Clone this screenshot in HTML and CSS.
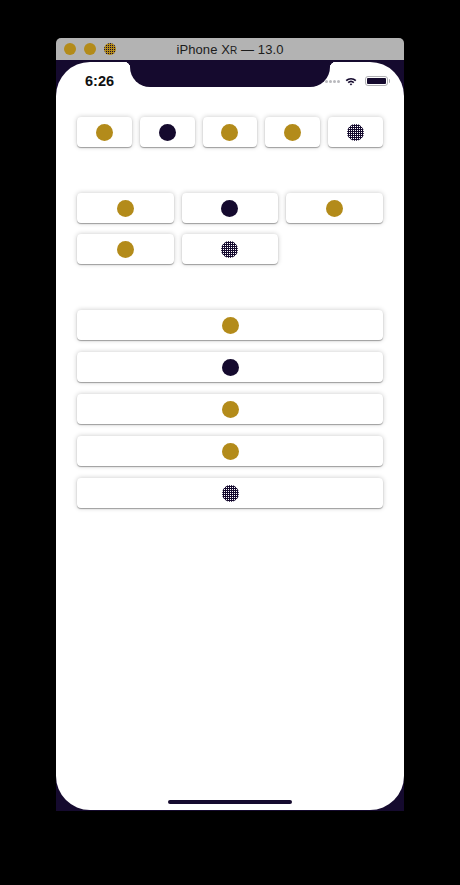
FILE: index.html
```html
<!DOCTYPE html>
<html lang="en">
<head>
<meta charset="utf-8">
<title>iPhone XR — 13.0</title>
<link rel="stylesheet" href="styles.css">
</head>
<body>
<div class="device">
  <div class="titlebar">
    <div class="lights">
      <span class="light"></span>
      <span class="light"></span>
      <span class="light dither"></span>
    </div>
    <div class="title">iPhone X<span class="sc">R</span> — 13.0</div>
    <div></div>
  </div>
  <div class="frame">
    <div class="screen">
      <div class="notch"></div>
      <div class="status">
        <span class="time">6:26</span>
        <div class="status-icons">
          <span class="signal"><i></i><i></i><i></i><i></i></span>
          <svg class="wifi" width="12" height="9" viewBox="0 0 12 9">
            <path d="M0.6 3.1 A7.8 7.8 0 0 1 11.4 3.1 L10.2 4.3 A6.1 6.1 0 0 0 1.8 4.3 Z" fill="#150a2e"/>
            <path d="M2.6 5.1 A5 5 0 0 1 9.4 5.1 L8.2 6.3 A3.3 3.3 0 0 0 3.8 6.3 Z" fill="#150a2e"/>
            <path d="M4.6 7.1 A2 2 0 0 1 7.4 7.1 L6 8.6 Z" fill="#150a2e"/>
          </svg>
          <span class="battery"><span class="level"></span></span><span class="nub"></span>
        </div>
      </div>
      <main class="content">
        <section class="grid five">
          <div class="card"><span class="dot gold"></span></div>
          <div class="card"><span class="dot dark"></span></div>
          <div class="card"><span class="dot gold"></span></div>
          <div class="card"><span class="dot gold"></span></div>
          <div class="card"><span class="dot dotted"></span></div>
        </section>
        <section class="grid three">
          <div class="card"><span class="dot gold"></span></div>
          <div class="card"><span class="dot dark"></span></div>
          <div class="card"><span class="dot gold"></span></div>
          <div class="card"><span class="dot gold"></span></div>
          <div class="card"><span class="dot dotted"></span></div>
        </section>
        <section class="list">
          <div class="card"><span class="dot gold"></span></div>
          <div class="card"><span class="dot dark"></span></div>
          <div class="card"><span class="dot gold"></span></div>
          <div class="card"><span class="dot gold"></span></div>
          <div class="card"><span class="dot dotted"></span></div>
        </section>
      </main>
      <div class="home"></div>
    </div>
  </div>
</div>
</body>
</html>
```

FILE: styles.css
```css
html, body {
  margin: 0;
  padding: 0;
  background: #000;
}

body {
  font-family: "Liberation Sans", Arial, sans-serif;
  width: 460px;
  height: 885px;
  overflow: hidden;
}

.device {
  width: 348px;
  margin: 38px 0 0 56px;
}

.titlebar {
  height: 22px;
  background: #b3b3b3;
  border-radius: 5px 5px 0 0;
  display: grid;
  grid-template-columns: 1fr auto 1fr;
  align-items: center;
}

.lights {
  display: flex;
  gap: 8px;
  padding-left: 8px;
}

.light {
  width: 12px;
  height: 12px;
  border-radius: 50%;
  background: #b38b1a;
}

.light.dither {
  background:
    linear-gradient(90deg, transparent 1px, #b38b1a 1px) 0 0 / 2px 2px,
    linear-gradient(#150a2e 1px, #b38b1a 1px) 0 0 / 2px 2px;
}

.title {
  font-size: 13px;
  color: #1c1c1c;
  letter-spacing: 0.1px;
}

.title .sc {
  font-size: 10px;
}

.frame {
  background: #150a2e;
  padding: 2px 0 1px;
}

.screen {
  position: relative;
  height: 748px;
  background: #fff;
  border-radius: 34px;
  display: flex;
  flex-direction: column;
}

.notch {
  position: absolute;
  top: -2px;
  left: 74px;
  width: 200px;
  height: 27px;
  background: #150a2e;
  border-radius: 0 0 20px 20px;
}

.notch::before,
.notch::after {
  content: "";
  position: absolute;
  top: 2px;
  width: 6px;
  height: 6px;
}

.notch::before {
  left: -6px;
  background: radial-gradient(circle at 0 100%, transparent 6px, #150a2e 6.5px);
}

.notch::after {
  right: -6px;
  background: radial-gradient(circle at 100% 100%, transparent 6px, #150a2e 6.5px);
}

.status {
  height: 44px;
  margin-top: -3px;
  display: flex;
  align-items: center;
  justify-content: space-between;
  padding: 0 14px 0 29px;
}

.time {
  font-size: 14.5px;
  font-weight: bold;
  color: #111;
}

.status-icons {
  display: flex;
  align-items: center;
}

.signal {
  display: flex;
  gap: 1px;
  margin-right: 5px;
}

.signal i {
  width: 3px;
  height: 3px;
  border-radius: 50%;
  background: #b9b9bd;
}

.wifi {
  display: block;
  margin-right: 8px;
}

.battery {
  width: 19px;
  height: 6px;
  border: 1px solid #b0b0b4;
  border-radius: 3px;
  padding: 1px;
  display: flex;
}

.battery .level {
  flex: 1;
  background: #150a2e;
  border-radius: 1px;
}

.nub {
  width: 1.5px;
  height: 4px;
  background: #b0b0b4;
  border-radius: 0 1px 1px 0;
  margin-left: 1px;
}

.content {
  padding: 14px 21px 0;
}

.grid {
  display: grid;
  column-gap: 8px;
  row-gap: 11px;
}

.grid.five {
  grid-template-columns: repeat(5, 1fr);
}

.grid.three {
  grid-template-columns: repeat(3, 1fr);
  margin-top: 46px;
}

.list {
  margin-top: 46px;
  display: flex;
  flex-direction: column;
  gap: 12px;
}

.card {
  height: 30px;
  background: #fff;
  border-radius: 4px;
  box-shadow: 0 1px 1px rgba(0, 0, 0, 0.32), 0 0 5px rgba(0, 0, 0, 0.22);
  display: flex;
  align-items: center;
  justify-content: center;
}

.dot {
  width: 17px;
  height: 17px;
  border-radius: 50%;
}

.dot.gold {
  background: #b38b1a;
}

.dot.dark {
  background: #150a2e;
}

.dot.dotted {
  background:
    linear-gradient(90deg, transparent 1px, #150a2e 1px) 0 0 / 2px 2px,
    linear-gradient(#ffffff 1px, #150a2e 1px) 0 0 / 2px 2px;
}

.home {
  margin: auto auto 6px;
  width: 124px;
  height: 4px;
  border-radius: 2px;
  background: #150a2e;
}
```
